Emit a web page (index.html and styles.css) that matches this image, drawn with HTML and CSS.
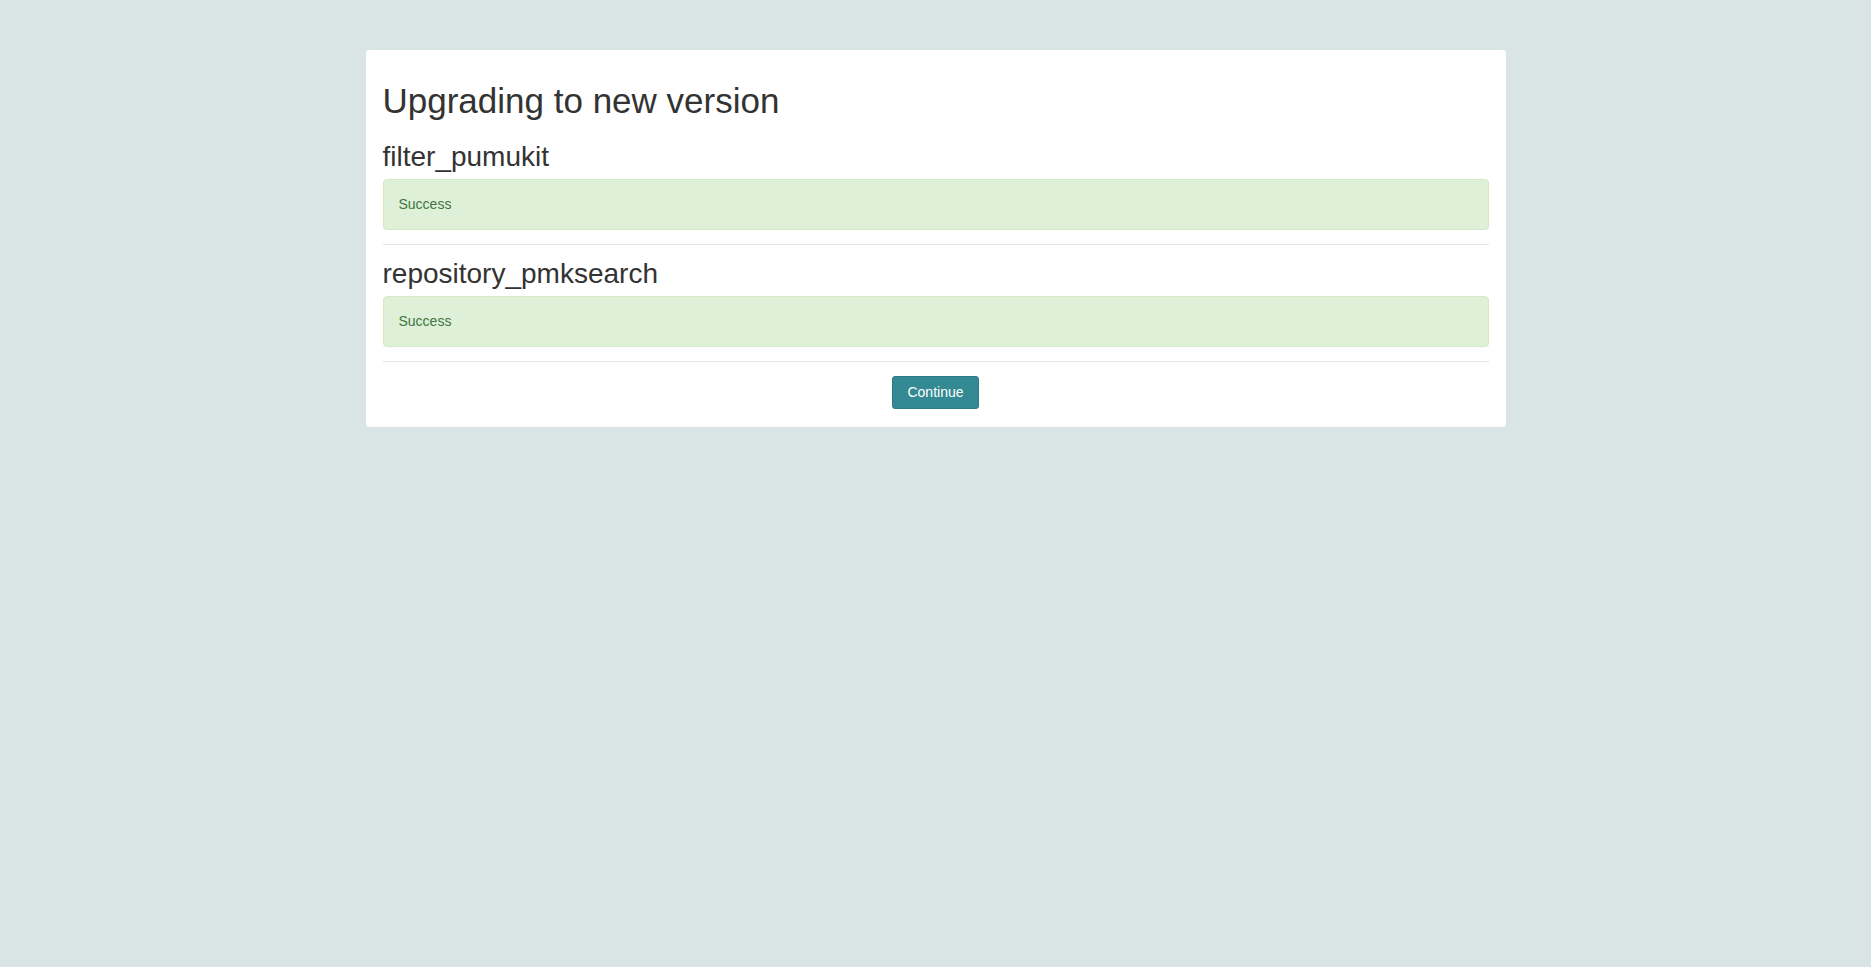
FILE: index.html
```html
<!DOCTYPE html>
<html lang="en">
<head>
<meta charset="utf-8">
<title>Upgrading to new version</title>
<link rel="stylesheet" href="styles.css">
</head>
<body>
<div class="card">
  <h1 class="title">Upgrading to new version</h1>
  <section class="step">
    <h3 class="step-name">filter_pumukit</h3>
    <div class="alert">Success</div>
    <hr class="divider">
  </section>
  <section class="step">
    <h3 class="step-name">repository_pmksearch</h3>
    <div class="alert">Success</div>
    <hr class="divider">
  </section>
  <div class="actions">
    <button class="btn" type="button">Continue</button>
  </div>
</div>
</body>
</html>
```
FILE: styles.css
```css
html, body {
  margin: 0;
  padding: 0;
}
body {
  background: #d9e5e5;
  font-family: "Liberation Sans", Arial, Helvetica, sans-serif;
  font-size: 14px;
  line-height: 1.42857;
  color: #333333;
  padding-top: 50px;
}
.card {
  width: 1140px;
  box-sizing: border-box;
  margin: 0 auto;
  background: #ffffff;
  border-radius: 4px;
  padding: 32px 17px 18px;
}
.title {
  font-size: 35px;
  font-weight: normal;
  line-height: 38.5px;
  margin: 0 0 20px;
}
.step-name {
  font-size: 28px;
  font-weight: normal;
  line-height: 31px;
  margin: 0 0 7px;
}
.alert {
  background: #dff0d8;
  border: 1px solid #d6e9c6;
  color: #3c763d;
  border-radius: 4px;
  padding: 14px 15px 15px;
  line-height: 20px;
}
.divider {
  border: 0;
  border-top: 1px solid #e5e5e5;
  margin: 14px 0 13px;
}
.actions {
  display: flex;
  justify-content: center;
  padding-top: 1px;
}
.btn {
  font-family: "Liberation Sans", Arial, Helvetica, sans-serif;
  font-size: 14px;
  line-height: 19px;
  padding: 6px 14px;
  color: #ffffff;
  background: #348a93;
  border: 1px solid #2e7b83;
  border-radius: 3px;
  cursor: pointer;
}
```
